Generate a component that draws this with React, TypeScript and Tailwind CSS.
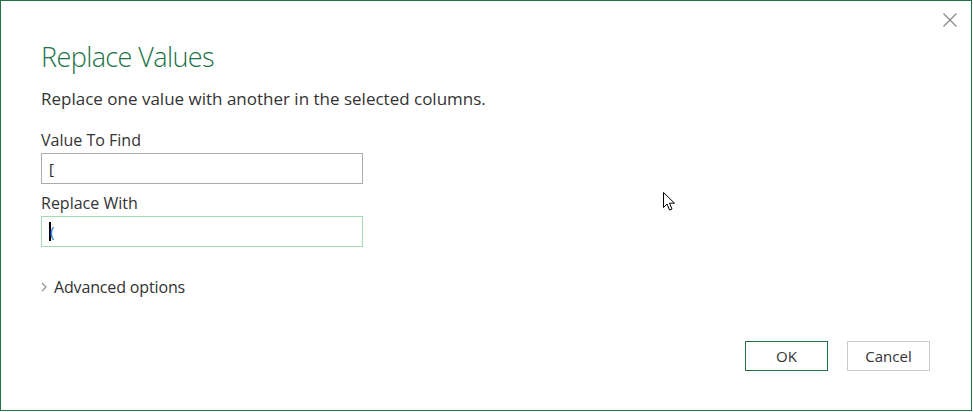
import React from "react";

export default function App() {
  return (
    <div className="w-[973px] h-[412px] bg-white" style={{ fontFamily: '"Open Sans", "Noto Sans", sans-serif' }}>
      <div className="relative w-[972px] h-[411px] border border-[#217346] bg-white flex flex-col pl-[40px]">
        <button className="absolute left-[940px] top-[10px] w-[17px] h-[17px] flex items-center justify-center">
          <svg width="16" height="16" viewBox="0 0 16 16">
            <path d="M1.5 1.5 L14.5 14.5 M14.5 1.5 L1.5 14.5" stroke="#8a8a8a" strokeWidth="1.3" />
          </svg>
        </button>
        <div className="mt-[36px] h-[40px] leading-[40px] text-[27px] font-light text-[#217346] tracking-[-0.6px]">Replace Values</div>
        <div className="mt-[10px] h-[24px] leading-[24px] text-[17px] text-[#333333]">
          Replace one value with another in the selected columns.
        </div>
        <div className="mt-[17px] h-[24px] leading-[24px] text-[16px] text-[#333333]">Value To Find</div>
        <div className="mt-[1px] w-[322px] h-[31px] border border-[#ababab] flex items-center pl-[7px] text-[15px] text-[#222]">[</div>
        <div className="mt-[7px] h-[24px] leading-[24px] text-[16px] text-[#333333]">Replace With</div>
        <div className="mt-[1px] w-[322px] h-[31px] border border-[#9fdcb7] flex items-center pl-[7px] text-[15px] text-[#2b6cb0]">
          <span className="w-[2px] h-[19px] bg-black mr-[-1px]"></span>
          <span>(</span>
        </div>
        <div className="mt-[28px] h-[24px] flex items-center gap-[6px] text-[16px] text-[#333333] tracking-[-0.15px]">
          <svg width="8" height="12" viewBox="0 0 8 12" className="ml-[-1px]">
            <path d="M2 2 L6 6 L2 10" stroke="#8a8a8a" strokeWidth="1.1" fill="none" />
          </svg>
          <span>Advanced options</span>
        </div>
        <div className="mt-[42px] flex justify-end gap-[19px] pr-[41px]">
          <button className="w-[83px] h-[30px] border border-[#217346] bg-white text-[15px] text-[#333] flex items-center justify-center">OK</button>
          <button className="w-[83px] h-[30px] border border-[#cccccc] bg-white text-[15px] text-[#333] flex items-center justify-center">Cancel</button>
        </div>
        <svg className="absolute left-[661px] top-[190px]" width="14" height="22" viewBox="0 0 14 22">
          <path d="M1.5 1.5 L1.5 16.5 L5 13 L7.5 19 L10 18 L7.5 12.2 L12.5 12.2 Z" fill="white" stroke="black" strokeWidth="1" strokeLinejoin="miter" />
        </svg>
      </div>
    </div>
  );
}
